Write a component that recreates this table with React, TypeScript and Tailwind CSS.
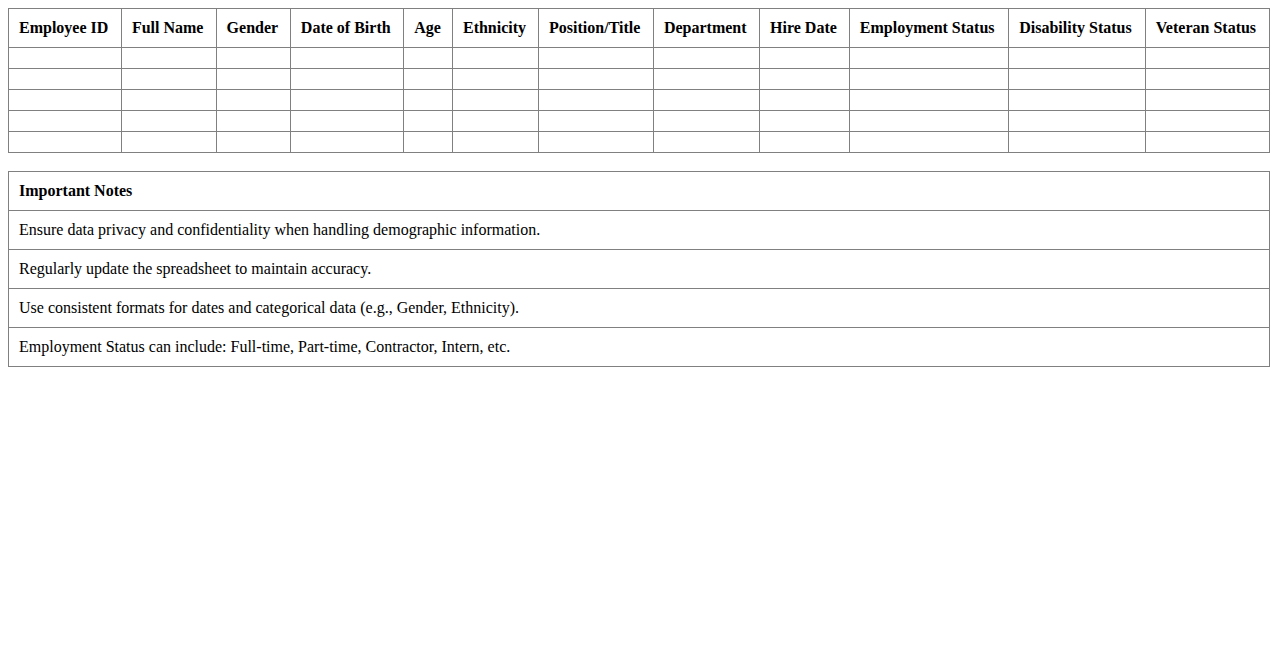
import React from "react";

const columns = [
  "Employee ID",
  "Full Name",
  "Gender",
  "Date of Birth",
  "Age",
  "Ethnicity",
  "Position/Title",
  "Department",
  "Hire Date",
  "Employment Status",
  "Disability Status",
  "Veteran Status",
];

const notes = [
  "Ensure data privacy and confidentiality when handling demographic information.",
  "Regularly update the spreadsheet to maintain accuracy.",
  "Use consistent formats for dates and categorical data (e.g., Gender, Ethnicity).",
  "Employment Status can include: Full-time, Part-time, Contractor, Intern, etc.",
];

const App: React.FC = () => {
  const rows = [0, 1, 2, 3, 4];

  return (
    <div className="min-h-screen bg-white p-2 text-black text-base leading-[normal] font-['Liberation_Serif','Times_New_Roman',serif]">
      {/* Demographics table */}
      <table className="w-full border-collapse">
        <thead>
          <tr>
            {columns.map((col) => (
              <th key={col} className="border border-[#808080] p-[10px] text-left font-bold">
                {col}
              </th>
            ))}
          </tr>
        </thead>
        <tbody>
          {rows.map((r) => (
            <tr key={r}>
              {columns.map((col) => (
                <td key={col} className="border border-[#808080] p-[10px]"></td>
              ))}
            </tr>
          ))}
        </tbody>
      </table>

      {/* Notes */}
      <table className="w-full border-collapse mt-[18px]">
        <thead>
          <tr>
            <th className="border border-[#808080] p-[10px] text-left font-bold">Important Notes</th>
          </tr>
        </thead>
        <tbody>
          {notes.map((note) => (
            <tr key={note}>
              <td className="border border-[#808080] p-[10px]">{note}</td>
            </tr>
          ))}
        </tbody>
      </table>
    </div>
  );
};

export default App;
